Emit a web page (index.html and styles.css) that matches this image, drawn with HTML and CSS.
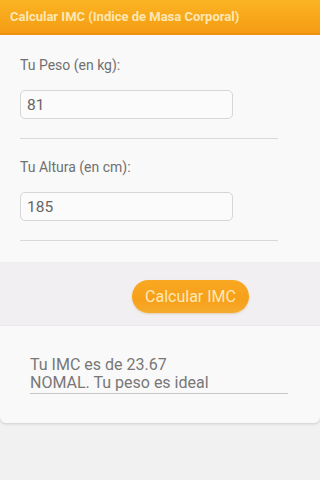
FILE: index.html
```html
<!DOCTYPE html>
<html lang="es">
<head>
<meta charset="utf-8">
<title>Calcular IMC</title>
<link rel="stylesheet" href="styles.css">
</head>
<body>
<header class="appbar">Calcular IMC (Indice de Masa Corporal)</header>
<main class="screen">
  <section class="form">
    <div class="field">
      <label class="label">Tu Peso (en kg):</label>
      <div class="input">81</div>
      <div class="rule"></div>
    </div>
    <div class="field">
      <label class="label">Tu Altura (en cm):</label>
      <div class="input">185</div>
      <div class="rule"></div>
    </div>
  </section>
  <section class="band">
    <button class="btn">Calcular IMC</button>
  </section>
  <section class="result">
    <div class="result-text">
      <div>Tu IMC es de 23.67</div>
      <div>NOMAL. Tu peso es ideal</div>
    </div>
  </section>
</main>
</body>
</html>
```
FILE: styles.css
```css
html, body {
  margin: 0;
  padding: 0;
}
body {
  width: 320px;
  height: 480px;
  background: #f1f1f1;
  font-family: Roboto, "Noto Sans", sans-serif;
  overflow: hidden;
}
.appbar {
  height: 35px;
  box-sizing: border-box;
  padding-left: 10px;
  display: flex;
  align-items: center;
  font-size: 13px;
  font-weight: bold;
  color: #fde7b4;
  background: linear-gradient(#fbb423, #f59c14);
  border-bottom: 2px solid #ec9212;
  box-shadow: 0 1px 2px rgba(200,120,0,0.25);
}
.screen {
  display: flex;
  flex-direction: column;
}
.form {
  background: #f9f9f9;
  padding: 22px 0 21px 20px;
  display: flex;
  flex-direction: column;
  gap: 20px;
}
.field {
  display: flex;
  flex-direction: column;
}
.label {
  font-size: 14px;
  color: #707070;
  line-height: 16px;
}
.input {
  margin-top: 17px;
  width: 213px;
  height: 29px;
  box-sizing: border-box;
  border: 1px solid #d6d6d6;
  border-radius: 5px;
  background: #fbfbfb;
  padding-left: 6px;
  display: flex;
  align-items: center;
  font-size: 15.5px;
  color: #666;
}
.rule {
  margin-top: 19px;
  width: 258px;
  height: 1px;
  background: #d9d9d9;
}
.band {
  background: #f1eff2;
  height: 64px;
  display: flex;
  align-items: flex-start;
  padding: 18px 0 0 132px;
  box-sizing: border-box;
}
.btn {
  width: 117px;
  height: 33px;
  border: none;
  border-radius: 17px;
  background: linear-gradient(#f9a821, #f7a01a 60%, #f6ab2e);
  color: #fde9b8;
  font-family: Roboto, "Noto Sans", sans-serif;
  font-size: 16px;
  padding: 0;
  box-shadow: 0 1px 2px rgba(200,130,20,0.3);
}
.result {
  background: #f9f9f9;
  height: 97px;
  border-radius: 0 0 6px 6px;
  box-shadow: 0 1px 3px rgba(0,0,0,0.15);
  padding: 30px 32px 0 30px;
  box-sizing: border-box;
}
.result-text {
  font-size: 16px;
  line-height: 18px;
  color: #777;
  border-bottom: 1px solid #c8c8c8;
  padding-bottom: 1px;
}
```
